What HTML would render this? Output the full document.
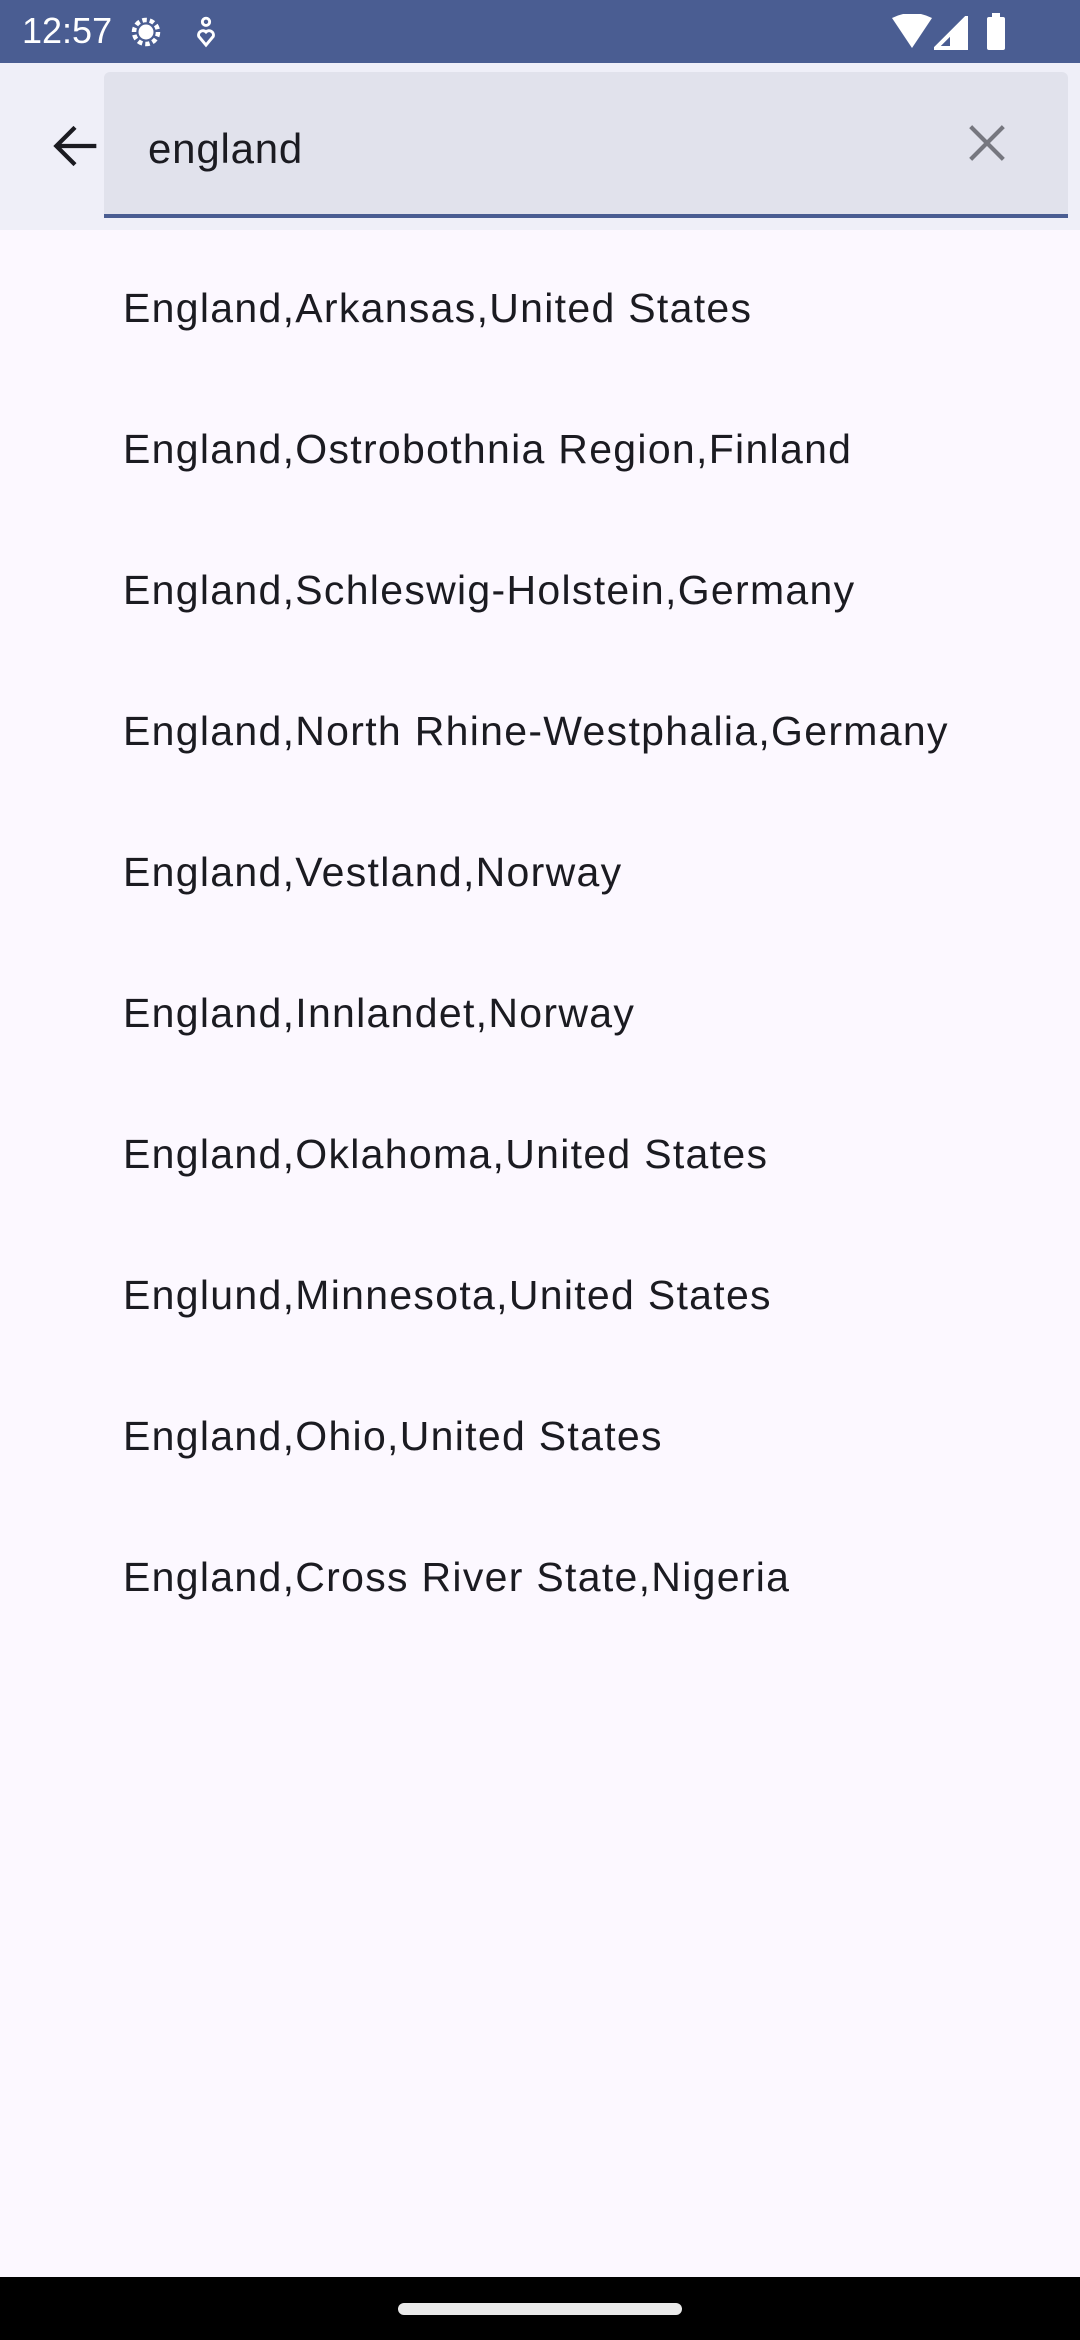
<!DOCTYPE html>
<html><head><meta charset="utf-8"><style>
html,body{margin:0;padding:0;width:1080px;height:2340px;overflow:hidden;background:#fcf8ff;font-family:"Liberation Sans",sans-serif;}
.status{position:absolute;left:0;top:0;width:1080px;height:63px;background:#4a5d92;color:#fff;}
.header{position:absolute;left:0;top:63px;width:1080px;height:167px;background:#efeff8;}
.field{position:absolute;left:104px;top:72px;width:964px;height:142px;background:#e1e2ec;border-radius:6px 6px 0 0;border-bottom:4px solid #4a5d92;}
.row{position:absolute;left:123px;font-size:41px;color:#1b1b21;white-space:nowrap;letter-spacing:1.3px;}
.nav{position:absolute;left:0;top:2277px;width:1080px;height:63px;background:#000;}
.pill{position:absolute;left:398px;top:2303px;width:284px;height:12px;border-radius:6px;background:#eaeaea;}
</style></head><body>
<div class="status">
<div style="position:absolute;left:22px;top:10px;font-size:36px;">12:57</div>
<svg style="position:absolute;left:128px;top:14px" width="36" height="36" viewBox="0 0 24 24"><circle cx="12" cy="12" r="8" fill="none" stroke="#fff" stroke-width="3" stroke-dasharray="3 2"/><circle cx="12" cy="12" r="5" fill="#fff"/></svg>
<svg style="position:absolute;left:194px;top:16px" width="24" height="32" viewBox="0 0 16 22"><circle cx="8" cy="4" r="2.5" fill="none" stroke="#fff" stroke-width="2"/><path d="M8 20 L3 14 A3 3 0 0 1 8 11 A3 3 0 0 1 13 14 Z" fill="none" stroke="#fff" stroke-width="2"/></svg>
<svg style="position:absolute;left:890px;top:14px" width="44" height="36" viewBox="0 0 44 36"><path d="M2 4 Q22 -6 42 4 L22 34 Z" fill="#fff"/></svg>
<svg style="position:absolute;left:934px;top:16px" width="34" height="34" viewBox="0 0 34 34"><path d="M32 2 L32 32 L2 32 Z" fill="none" stroke="#fff" stroke-width="4"/><path d="M32 2 L32 32 L16 32 L16 18 Z" fill="#fff"/></svg>
<div style="position:absolute;left:987px;top:17px;width:18px;height:33px;background:#fff;border-radius:2px;"></div>
<div style="position:absolute;left:992px;top:13px;width:8px;height:5px;background:#fff;"></div>
</div>
<div class="header">
<svg style="position:absolute;left:43px;top:51px" width="64" height="64" viewBox="0 0 24 24"><path d="M20 12H5 M12 5 L5 12 L12 19" fill="none" stroke="#1b1b21" stroke-width="1.6"/></svg>
</div>
<div class="field">
<div style="position:absolute;left:44px;top:53px;font-size:42px;letter-spacing:0.8px;color:#1b1b21;">england</div>
<svg style="position:absolute;left:855px;top:43px" width="56" height="56" viewBox="0 0 24 24"><path d="M5 5 L19 19 M19 5 L5 19" stroke="#76777f" stroke-width="1.8"/></svg>
</div>
<div class="row" style="top:285px">England,Arkansas,United States</div>
<div class="row" style="top:426px">England,Ostrobothnia Region,Finland</div>
<div class="row" style="top:567px">England,Schleswig-Holstein,Germany</div>
<div class="row" style="top:708px">England,North Rhine-Westphalia,Germany</div>
<div class="row" style="top:849px">England,Vestland,Norway</div>
<div class="row" style="top:990px">England,Innlandet,Norway</div>
<div class="row" style="top:1131px">England,Oklahoma,United States</div>
<div class="row" style="top:1272px">Englund,Minnesota,United States</div>
<div class="row" style="top:1413px">England,Ohio,United States</div>
<div class="row" style="top:1554px">England,Cross River State,Nigeria</div>
<div class="nav"></div><div class="pill"></div>
</body></html>
